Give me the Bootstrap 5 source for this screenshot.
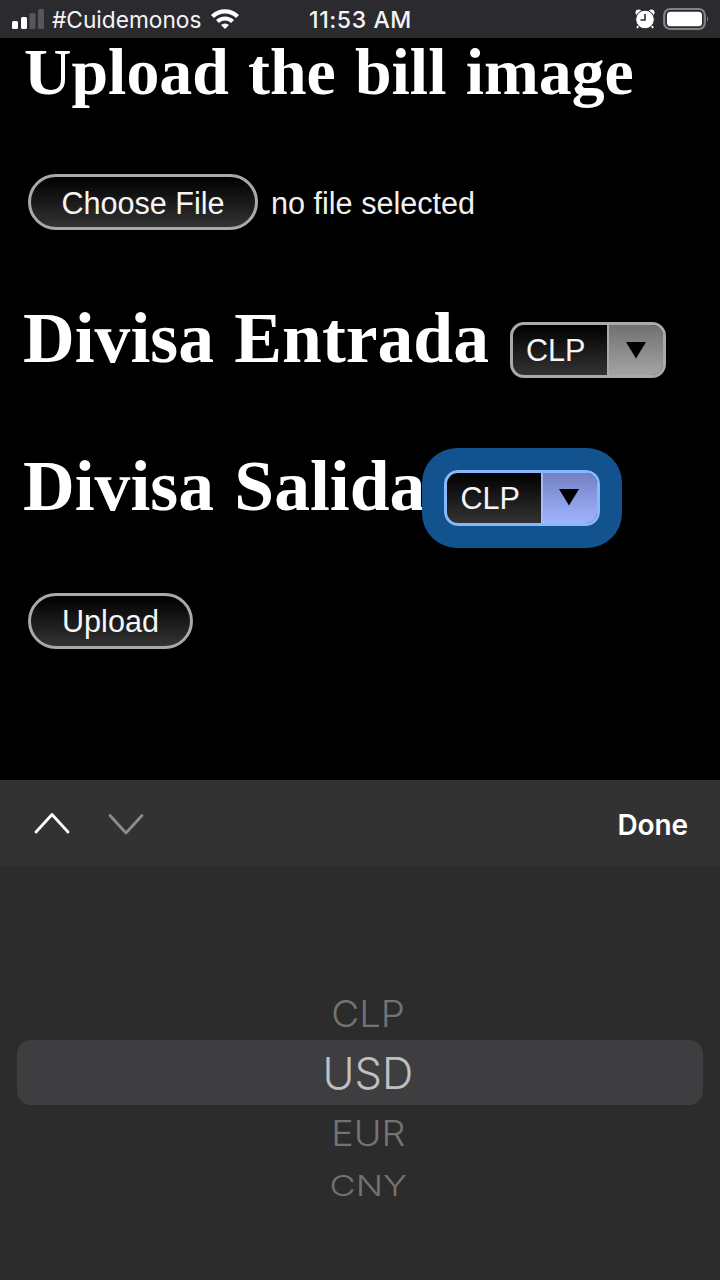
<!DOCTYPE html>
<html lang="en">
<head>
<meta charset="utf-8">
<meta name="viewport" content="width=device-width, initial-scale=1">
<title>Upload the bill image</title>
<link href="https://cdn.jsdelivr.net/npm/bootstrap@5.3.0/dist/css/bootstrap.min.css" rel="stylesheet">
<style>
body{background:#000;color:#fff;font-family:"Liberation Sans",Arial,sans-serif;width:720px;height:1280px;overflow:hidden}
.status{height:38px;background:#2b2a2f;font:400 23px/40px Inter,sans-serif;color:#f4f4f6}
.status svg{flex:none}
.status span{padding-top:2px}
.carrier{width:159px;margin-left:7px;font-size:22.700px}
.clock{width:110px;margin-left:70px;font-weight:500;letter-spacing:.6px}
.page{height:742px;padding-left:24px}
.title{font:700 65.8px/67px "Liberation Serif",serif;word-spacing:2.8px;height:67px;margin:0 0 69px}
.label-lg{font:700 71.600px/29.4px "Liberation Serif",serif;word-spacing:2.500px;margin:0 0 0 -1px;padding-top:1px}
.file-row{height:56px}
.pill,.pill:hover{height:56px;border:3px solid #a9a9a9;border-radius:28px;background:linear-gradient(#000,#333);color:#f5f5f5;font-size:30.6px;line-height:50px;padding:0;margin-left:4px}
.file-row .pill{padding-top:1px}
.file-note{font-size:30.6px;line-height:58px;color:#f0f0f0;margin-left:13px}
.picker-row{margin-top:92px;height:56px}
.currency{width:156px;height:56px;border:3px solid #aaa;border-radius:14px;overflow:hidden;font-size:30.6px;line-height:51px;color:#f5f5f5;background:linear-gradient(#000,#333)}
.currency .value{width:94px;padding-left:13px}
.currency .arrow{border-left:2px solid #aaa;background:linear-gradient(#707070,#a4a4a4)}
.currency.active{border-color:#86b7ff;box-shadow:0 0 0 22px #12528f;position:relative}
.currency.active .arrow{border-color:#a3bcff;background:linear-gradient(#7481c2,#a0b4ff);padding-right:3px}
.accessory{height:86px;background:#323232;padding:0 32px 0 34px}
.done{font:600 28px/90px Inter,sans-serif;padding-top:3px;letter-spacing:-.1px}
.wheel{height:414px;background:#2c2c2c;font-family:Inter,sans-serif;padding:122px 17px 0}
.opt{color:#737373;padding-left:16px;white-space:nowrap;text-align:center;height:52px;line-height:52px}
.opt b{font-weight:350;display:inline-block}
.chosen{height:65px;line-height:67px;background:#3e3e41;border-radius:14px;color:#c0c0c2}
.near b{transform:scaleX(1.05)}
.far b{transform:scaleX(1.24)}
</style>
</head>
<body>
<header class="status d-flex align-items-center">
  <svg width="34" height="24" style="margin-left:11px" viewBox="0 0 34 24"><g fill="#fff"><rect x="1" y="14" width="6" height="8" rx="1.5"/><rect x="10" y="10" width="6" height="12" rx="1.5"/></g><g fill="#57565b"><rect x="18.500" y="6" width="6" height="16" rx="1.500"/><rect x="27" y="2" width="6" height="20" rx="1.500"/></g></svg>
  <span class="carrier">#Cuidemonos</span>
  <svg width="28" height="22" viewBox="0 0 28 22"><path d="M0 7A20 20 0 0 1 28 7L25 10A15.700 15.700 0 0 0 3 10ZM5 12A13 13 0 0 1 23 12L20 15A8.700 8.700 0 0 0 8 15ZM10 17A6 6 0 0 1 18 17L14 21Z" fill="#fff"/></svg>
  <span class="clock">11:53 AM</span>
  <svg width="20" height="20" style="margin-left:216px" viewBox="0 0 20 20"><g fill="#fff"><circle cx="3.500" cy="3.500" r="3"/><circle cx="16.500" cy="3.500" r="3"/></g><path d="M4 16L2 19M16 16L18 19" stroke="#fff" stroke-width="2"/><circle cx="10" cy="10.500" r="9.300" fill="#fff" stroke="#2b2a2f" stroke-width="1"/><path d="M10 5V11H5.500" stroke="#2b2a2f" stroke-width="1.600" fill="none"/></svg>
  <svg width="46" height="24" style="margin-left:8px" viewBox="0 0 46 24"><rect x="1.200" y="2" width="40.600" height="20" rx="6" fill="none" stroke="#838287" stroke-width="2.200"/><rect x="4" y="4.750" width="35" height="14.500" rx="3.500" fill="#fff"/><path d="M44 9Q46 12 44 15Z" fill="#838287"/></svg>
</header>
<main class="page">
  <h1 class="title text-nowrap">Upload the bill image</h1>
  <div class="file-row d-flex"><button class="pill btn" style="width:230px">Choose File</button><span class="file-note">no file selected</span></div>
  <div class="picker-row d-flex align-items-start">
    <h2 class="label-lg text-nowrap" style="width:487px">Divisa Entrada</h2>
    <div class="currency d-flex"><span class="value">CLP</span><span class="arrow flex-fill d-flex justify-content-center"><svg width="20" height="50" viewBox="0 0 20 50"><path d="M0 17H20L10 33.500Z"/></svg></span></div>
  </div>
  <div class="picker-row d-flex align-items-start">
    <h2 class="label-lg text-nowrap" style="width:421.400px">Divisa Salida</h2>
    <div class="currency active d-flex"><span class="value">CLP</span><span class="arrow flex-fill d-flex justify-content-center"><svg width="20" height="50" viewBox="0 0 20 50"><path d="M0 16H20L10 32.500Z"/></svg></span></div>
  </div>
  <button class="pill btn" style="width:165px;margin-top:67px">Upload</button>
</main>
<section>
  <div class="accessory d-flex align-items-center">
    <svg width="112" height="24" viewBox="0 0 112 24" fill="none" stroke-width="2.800" stroke-linecap="round" stroke-linejoin="round"><path d="M2 21L18 3.500L34 21" stroke="#fff"/><path d="M76 4.500L92 22L108 4.500" stroke="#8c8c8c"/></svg>
    <span class="done ms-auto">Done</span>
  </div>
  <div class="wheel">
    <div class="opt near" style="font-size:36.500px"><b>CLP</b></div>
    <div class="opt chosen" style="font-size:43.500px"><b>USD</b></div>
    <div class="opt near" style="font-size:36px;padding-top:2px"><b>EUR</b></div>
    <div class="opt far" style="font-size:29px;padding-top:3px"><b>CNY</b></div>
  </div>
</section>
<script src="https://cdn.jsdelivr.net/npm/bootstrap@5.3.0/dist/js/bootstrap.bundle.min.js"></script>
</body>
</html>
